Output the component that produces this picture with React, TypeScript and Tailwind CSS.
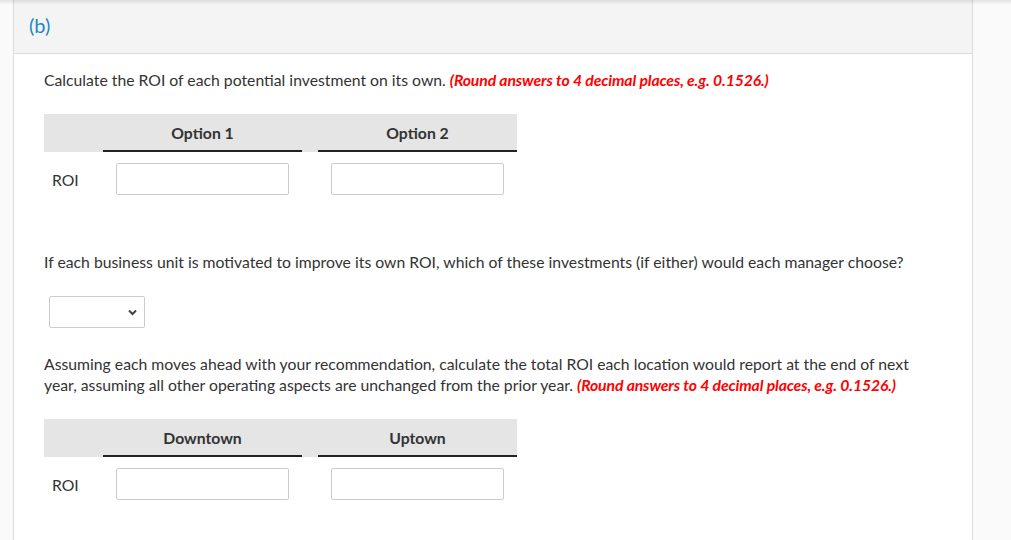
import React from 'react';

const font = { fontFamily: 'Lato, "Open Sans", sans-serif' };

function Note() {
  return (
    <span className="font-bold italic text-[#ff0000] tracking-[-0.12px]">
      (Round answers to 4 decimal places, e.g. 0.1526.)
    </span>
  );
}

function RoiTable({ cols }: { cols: [string, string] }) {
  return (
    <div className="w-[473px]">
      <div className="flex h-[38px] bg-[#e5e5e5]">
        <div className="w-[59px]" />
        <div className="w-[199px] flex items-center justify-center border-b-2 border-[#222] font-bold text-[#333]">
          {cols[0]}
        </div>
        <div className="w-[16px]" />
        <div className="w-[199px] flex items-center justify-center border-b-2 border-[#222] font-bold text-[#333]">
          {cols[1]}
        </div>
      </div>
      <div className="flex items-center h-[54px]">
        <div className="w-[59px] pl-[8px] text-[#333]">ROI</div>
        <div className="w-[199px] flex justify-center">
          <input className="w-[173px] h-[32px] border border-[#ccc] rounded-[2px] bg-white" />
        </div>
        <div className="w-[16px]" />
        <div className="w-[199px] flex justify-center">
          <input className="w-[173px] h-[32px] border border-[#ccc] rounded-[2px] bg-white" />
        </div>
      </div>
    </div>
  );
}

export default function App() {
  return (
    <div className="relative flex h-[540px] w-full overflow-hidden bg-[#fafafa]" style={font}>
      <div className="pointer-events-none absolute left-0 right-0 top-0 h-[5px] bg-gradient-to-b from-black/10 to-transparent" />
      <div className="ml-[13px] w-[960px] shrink-0 border-x border-[#dcdcdc] bg-white">
        <div className="h-[54px] border-b border-[#dcdcdc] bg-[#f4f4f4] pl-[15px] pt-[10px]">
          <span className="text-[20px] text-[#1f87c4]">(b)</span>
        </div>
        <div className="pl-[30px] pr-[44px] text-[15.75px] leading-[21px] text-[#333]">
          <p className="mt-[15px]">
            Calculate the ROI of each potential investment on its own. <Note />
          </p>
          <div className="mt-[24px]">
            <RoiTable cols={['Option 1', 'Option 2']} />
          </div>
          <p className="mt-[45px]">
            If each business unit is motivated to improve its own ROI, which of these investments (if either) would each manager choose?
          </p>
          <div className="mt-[24px] ml-[5px] relative w-[96px] h-[32px] border border-[#ccc] rounded-[2px] bg-white">
            <svg className="absolute right-[7px] top-[12px]" width="9" height="7" viewBox="0 0 9 7">
              <path d="M1 1.5 L4.5 5 L8 1.5" fill="none" stroke="#444" strokeWidth="2" />
            </svg>
          </div>
          <p className="mt-[25px]">
            Assuming each moves ahead with your recommendation, calculate the total ROI each location would report at the end of next year, assuming all other operating aspects are unchanged from the prior year. <Note />
          </p>
          <div className="mt-[24px]">
            <RoiTable cols={['Downtown', 'Uptown']} />
          </div>
        </div>
      </div>
    </div>
  );
}
